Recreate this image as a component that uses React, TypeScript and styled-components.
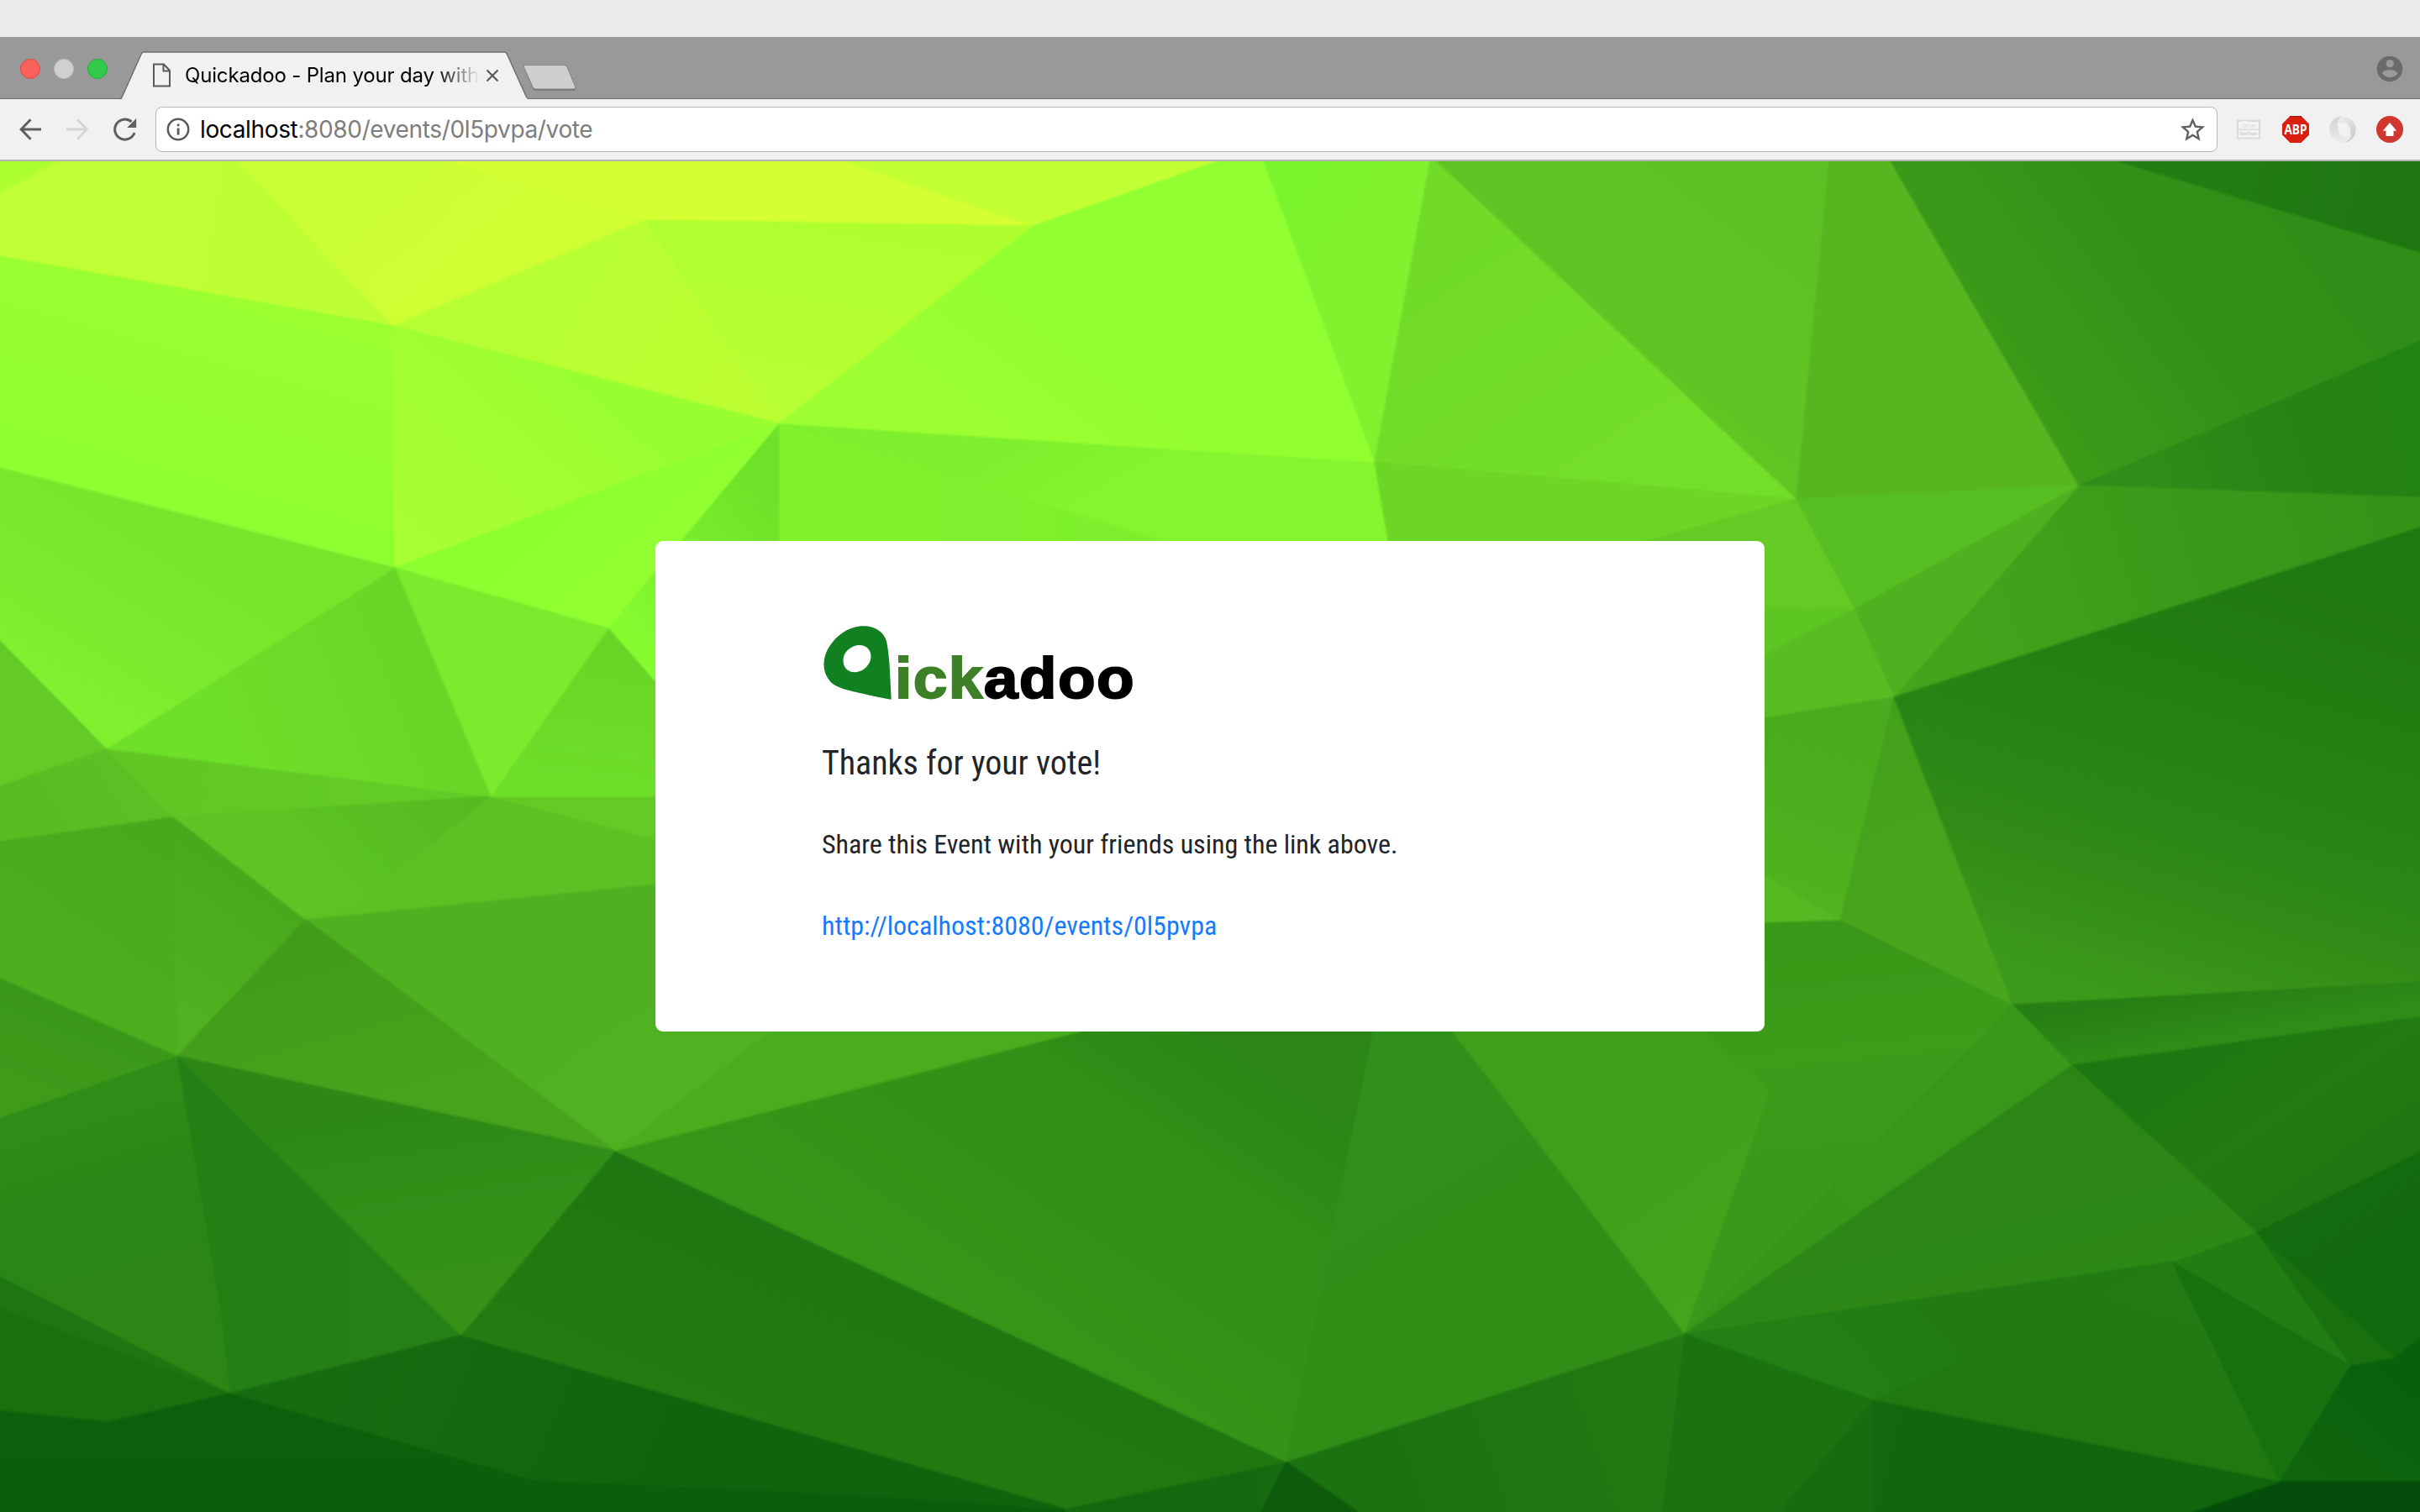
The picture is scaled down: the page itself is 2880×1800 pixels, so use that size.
import React from "react";
import styled, { createGlobalStyle } from "styled-components";

const GlobalStyle = createGlobalStyle`
  * { box-sizing: border-box; }
  html, body { margin: 0; padding: 0; }
  body { width: 2880px; height: 1800px; overflow: hidden; background: #ebebeb; }
  svg { display: block; flex: none; }
`;

/* ---------- browser window ---------- */

const Screen = styled.div`
  display: flex;
  flex-direction: column;
  width: 2880px;
  height: 1800px;
  font-family: Inter, "Liberation Sans", sans-serif;
`;

const MenuBar = styled.div`
  flex: none;
  height: 44px;
  background: #ebebeb;
`;

const TabStrip = styled.div`
  flex: none;
  display: flex;
  align-items: flex-start;
  height: 74px;
  padding-left: 24px;
  background: #999999;
  border-bottom: 1px solid #6d6d6d;
`;

const TrafficLights = styled.div`
  display: flex;
  gap: 16px;
  padding-top: 26px;
`;

const Light = styled.span<{ $fill: string; $edge: string }>`
  width: 24px;
  height: 24px;
  border-radius: 50%;
  background: ${(p) => p.$fill};
  border: 1px solid ${(p) => p.$edge};
`;

const Tab = styled.div`
  position: relative;
  display: flex;
  align-items: center;
  width: 486px;
  height: 58px;
  margin: 17px 0 0 15px;
  padding-left: 39px;
`;

const TabShape = styled.svg`
  position: absolute;
  left: 0;
  top: 0;
`;

const TabIcon = styled.svg`
  position: relative;
`;

const TabTitle = styled.div`
  position: relative;
  width: 352px;
  margin-left: 16px;
  white-space: nowrap;
  font-size: 24px;
  line-height: 34px;
  letter-spacing: -0.17px;
  color: #000;
  mask-image: linear-gradient(to right, #000 300px, transparent 351px);
`;

const CloseIcon = styled.svg`
  position: relative;
  margin-left: 6px;
`;

const NewTab = styled.svg`
  margin: 32px 0 0 -8px;
`;

const Account = styled.svg`
  margin: 22px 20px 0 auto;
`;

const Toolbar = styled.div`
  flex: none;
  display: flex;
  align-items: center;
  height: 74px;
  padding: 0 20px 0 23px;
  background: #f1f1f1;
  border-bottom: 2px solid #b4b2b4;
`;

const NavButtons = styled.div`
  display: flex;
  align-items: center;
  gap: 28px;
  width: 162px;
`;

const AddressBar = styled.div`
  display: flex;
  align-items: center;
  width: 2454px;
  height: 54px;
  padding: 0 11px 0 12px;
  background: #fff;
  border: 1.5px solid #b6b4b6;
  border-radius: 8px;
`;

const Url = styled.div`
  flex: 1;
  margin-left: 12px;
  font-size: 28px;
  line-height: 40px;
  letter-spacing: -0.36px;
  color: #7d7d7d;
`;

const Host = styled.span`
  color: #000;
`;

const Extensions = styled.div`
  display: flex;
  align-items: center;
  gap: 24px;
  margin-left: 23px;

  svg:first-child {
    margin-right: 2px;
  }
`;

/* ---------- page ---------- */

const Page = styled.main`
  position: relative;
  flex: 1;
  display: flex;
  justify-content: center;
  align-items: flex-start;
  padding-top: 452px;
  overflow: hidden;
  background: #4aab1e;
`;

const Backdrop = styled.svg`
  position: absolute;
  inset: 0;
  width: 2880px;
  height: 1608px;
  overflow: visible;
  filter: blur(1.3px);
`;

const Card = styled.section`
  position: relative;
  width: 1320px;
  height: 584px;
  padding: 100px 198px;
  background: #fff;
  border-radius: 9px;
  font-family: "Roboto Condensed", Roboto, sans-serif;
  color: #212529;
`;

const Logo = styled.div`
  display: flex;
  align-items: flex-end;
  height: 90px;
`;

const Wordmark = styled.div`
  margin: 0 0 -16px 3px;
  font-family: "Liberation Sans", Arial, sans-serif;
  font-weight: 700;
  font-size: 69px;
  line-height: 84px;
  letter-spacing: 1.3px;
  color: #000;
  -webkit-text-stroke: 2px currentColor;
  transform: scaleX(1.06);
  transform-origin: left center;
`;

const WordGreen = styled.span`
  color: #3d8027;
`;

const Heading = styled.h1`
  margin: 51px 0 0;
  font-weight: 400;
  font-size: 40px;
  line-height: 48px;
  letter-spacing: -0.03px;
`;

const Line = styled.p`
  margin: 49px 0 0;
  font-size: 32px;
  line-height: 48px;
  letter-spacing: -0.02px;

  h1 + & {
    margin-top: 48px;
  }
`;

const EventLink = styled.a`
  color: #147bff;
  text-decoration: none;
`;

/* ---------- low-poly backdrop ---------- */

type Stop = [number, string];
interface Facet {
  points: string;
  fill: string | { from: [number, number]; to: [number, number]; stops: Stop[] };
}

const flat = (points: string, fill: string): Facet => ({ points, fill });
const shade = (
  points: string,
  x1: number,
  y1: number,
  x2: number,
  y2: number,
  ...colors: string[]
): Facet => ({
  points,
  fill: {
    from: [x1, y1],
    to: [x2, y2],
    stops: colors.map((c, i) => [i / (colors.length - 1), c] as Stop),
  },
});

const facets: Facet[] = [
  flat("-20,180 84,180 70,192 0,232 -20,246", "#adff31"),
  shade("-20,243 0,230 70,192 85,180 272,180 468,388 0,305 -20,300", 0, 250, 450, 320, "#c1ff35", "#bdff34"),
  shade("272,180 500,180 768,262 468,388", 300, 192, 470, 380, "#c9ff33", "#ccff33", "#cffe33"),
  flat("500,180 970,180 1230,269 768,262", "#d5ff33"),
  flat("970,180 1495,176 1230,269", "#c2ff33"),
  shade("468,388 768,262 928,504", 620, 330, 850, 470, "#b7ff32", "#bdff31"),
  shade("768,262 1230,269 928,504", 980, 260, 940, 490, "#afff2e", "#b8ff33"),
  shade("-20,300 0,305 468,388 470,676 0,557 -20,552", 200, 340, 130, 590, "#9bff30", "#95ff31", "#8eff30"),
  shade("468,388 928,504 470,676", 680, 440, 500, 640, "#99fe30", "#a4ff31", "#a8ff32"),
  shade("470,676 928,504 724,748", 600, 600, 720, 740, "#8bff30", "#93ff31"),
  shade("724,748 850,598 800,830 770,820", 740, 740, 790, 700, "#82f82f", "#78f02d"),
  shade("724,748 928,504 928,660 780,820", 740, 740, 925, 590, "#86fb30", "#78ed2c", "#6ee129"),
  shade("928,504 1440,660 928,660", 930, 640, 1400, 640, "#82f22e", "#7cef2c"),
  shade("928,504 1636,550 1655,660 1440,660", 1200, 530, 1250, 620, "#7eef2d", "#84f52e"),
  shade("1230,269 1495,176 1503,180 1636,550 928,504", 1350, 250, 1150, 520, "#91ff31", "#94ff31", "#9dff31"),
  shade("1500,180 1705,180 1636,550", 1550, 200, 1640, 260, "#7af42c", "#81f22e"),
  shade("1704,180 2138,594 1636,550", 1700, 250, 1900, 560, "#71db28", "#74df28"),
  shade("1697,180 2178,180 2138,594", 2100, 200, 1900, 460, "#5cc023", "#62c725"),
  flat("2178,180 2243,180 2474,578 2138,594", "#57b620"),
  shade("2243,180 2495,180 2520,192 2880,300 2900,306 2900,400 2880,408 2474,578", 2750, 250, 2400, 500, "#2f8e17", "#349218", "#3e9c1a"),
  shade("2495,180 2900,180 2900,306 2880,300 2520,192", 2650, 200, 2850, 260, "#227d13", "#1e7611"),
  shade("2474,578 2900,398 2900,594 2880,592", 2550, 570, 2850, 470, "#2f8e18", "#298515", "#228213"),
  shade("2474,578 2900,593 2900,622 2880,628 2254,830", 2350, 760, 2850, 610, "#42a41b", "#3b9a1a", "#359317"),
  flat("1636,550 2138,594 1960,660 1655,660", "#6dd526"),
  flat("2138,594 2207,725 2080,725 1930,660 1960,644", "#66ca24"),
  flat("2138,594 2474,578 2207,725", "#57bf22"),
  flat("2207,725 2474,578 2254,830", "#4fb11f"),
  flat("2207,725 2080,790 2080,722", "#5ec623"),
  flat("2207,725 2254,830 2080,858 2080,790", "#57bd22"),
  shade("2254,830 2190,1096 2080,1030 2080,858", 2180, 850, 2110, 1050, "#49ab1d", "#4fb31f"),
  flat("2190,1096 2080,1102 2080,1030", "#55b921"),
  shade("2254,830 2395,1196 2190,1096", 2230, 880, 2350, 1150, "#44a11b", "#49a61c"),
  shade("2254,830 2880,628 2900,622 2900,1168 2880,1169 2395,1196", 2700, 660, 2540, 1190, "#1f7911", "#237e12", "#278415", "#318c17", "#3c9a1a"),
  shade("2395,1196 2900,1168 2900,1210 2465,1268", 2600, 1180, 2610, 1240, "#267f14", "#2f8c17"),
  shade("2465,1268 2900,1208 2900,1362 2685,1467", 2620, 1260, 2740, 1440, "#1e7811", "#227c12", "#207611"),
  shade("2685,1467 2900,1362 2900,1575 2850,1617", 2750, 1440, 2850, 1580, "#146b0f", "#116a0e"),
  flat("2685,1467 2850,1617 2797,1626", "#18700f"),
  flat("2685,1467 2797,1626 2585,1502", "#227d13"),
  shade("2465,1268 2685,1467 2585,1502 2004,1588", 2450, 1320, 2500, 1520, "#2c8616", "#2d8916"),
  shade("2395,1196 2465,1268 2004,1588", 2420, 1230, 2050, 1550, "#379819", "#369618"),
  shade("2060,1100 2190,1096 2395,1196 2004,1588 2105,1300 1990,1200", 2150, 1110, 2180, 1400, "#3a9818", "#3d9c1a", "#3a991a"),
  shade("1706,1200 2000,1200 2105,1300 2004,1588", 1750, 1220, 2000, 1560, "#40a01b", "#3f9f1a", "#44a51c"),
  shade("2585,1502 2004,1588 2229,1667", 2300, 1550, 2200, 1640, "#217b12", "#228014"),
  shade("2585,1502 2229,1667 2713,1764", 2550, 1540, 2500, 1720, "#237b13", "#207810"),
  flat("2585,1502 2797,1626 2713,1764", "#18710f"),
  shade("2797,1626 2850,1617 2900,1575 2900,1764 2713,1764", 2740, 1740, 2850, 1620, "#0f660e", "#09600c"),
  flat("2713,1764 2900,1764 2900,1820 2550,1820", "#054d0b"),
  shade("2229,1667 2713,1764 2550,1820 2229,1820", 2230, 1700, 2600, 1790, "#12680e", "#10650d"),
  flat("2229,1667 2229,1820 2100,1820", "#166c0f"),
  flat("2004,1588 2229,1667 2100,1820 1975,1820", "#1a7210"),
  shade("1530,1740 2004,1588 1975,1820 1645,1820", 1600, 1760, 1980, 1620, "#1a7210", "#237a12"),
  flat("1530,1740 1645,1820 1490,1820", "#0e5b0b"),
  shade("1530,1740 1490,1820 1267,1820 1267,1796", 1520, 1760, 1280, 1800, "#15690f", "#13680e"),
  shade("732,1370 1530,1740 1267,1796 548,1590", 1000, 1470, 900, 1700, "#1e7711", "#21780f", "#237c12"),
  shade("732,1370 1285,1228 1340,1200 1706,1200 2004,1588 1530,1740", 1450, 1230, 1200, 1600, "#2b8615", "#309017", "#349316", "#379618"),
  shade("1640,1200 1706,1200 2004,1588 1530,1740", 1630, 1300, 1750, 1500, "#30901a", "#308e17"),
  flat("732,1370 960,1190 1350,1200 1285,1228 965,1310", "#49ad1e"),
  shade("363,1094 800,1050 800,1190 965,1190 732,1370", 550, 1080, 720, 1320, "#4eb120", "#50b221"),
  shade("210,1257 363,1094 732,1370", 400, 1130, 450, 1310, "#429c1a", "#47a31b"),
  shade("210,1257 732,1370 548,1590", 500, 1310, 540, 1570, "#2d8816", "#319018", "#389217"),
  shade("210,1257 548,1590 273,1659 258,1560", 250, 1450, 430, 1450, "#228014", "#258015"),
  shade("-20,1336 0,1330 210,1257 262,1560 273,1659 0,1520 -20,1512", 80, 1320, 160, 1590, "#2f8d17", "#2a8616", "#2c8616"),
  flat("-20,1512 0,1520 273,1659 0,1558 -20,1552", "#1e7611"),
  flat("-20,1552 0,1558 273,1659 128,1693 0,1679 -20,1677", "#18700f"),
  shade("273,1659 548,1590 1267,1796 1267,1820 980,1782 637,1763", 420, 1620, 800, 1780, "#186b0f", "#11640d"),
  shade("-20,1677 128,1693 273,1659 637,1763 980,1778 1267,1797 1267,1820 -20,1820", 200, 1700, 200, 1800, "#0b610b", "#0c5d0a"),
  shade("-20,1003 0,1001 206,972 210,1257 0,1165 -20,1157", 200, 980, 60, 1180, "#47a91c", "#4dae1e"),
  shade("206,972 363,1094 210,1257", 320, 1060, 220, 1200, "#48a91d", "#4fb220"),
  shade("-20,1157 0,1165 210,1257 0,1330 -20,1336", 100, 1200, 60, 1300, "#3a9819", "#3f9b1a"),
  shade("-20,942 0,935 127,891 206,972 0,1001 -20,1003", 150, 900, 20, 980, "#5bc123", "#57bc22"),
  flat("-20,740 0,762 127,891 0,935 -20,942", "#63ca26"),
  shade("127,891 584,948 206,972", 200, 910, 450, 950, "#62c725", "#63cb26"),
  shade("206,972 584,948 800,1004 800,1050 363,1094", 560, 950, 420, 1080, "#55ba21", "#5dc423"),
  flat("584,948 430,1075 363,1094 800,1050 800,1004", "#5cc223"),
  flat("584,948 800,948 800,1004", "#64cb25"),
  shade("584,948 724,748 800,835 800,948", 720, 770, 700, 930, "#67d526", "#6edf29"),
  flat("470,676 724,748 584,948", "#7aec2d"),
  shade("470,676 584,948 127,891", 500, 800, 260, 890, "#69d627", "#6fe029"),
  shade("-20,552 0,557 470,676 127,891 0,762 -20,740", 250, 640, 120, 850, "#77e62b", "#79ea2c", "#80f12f"),
];

function Facets() {
  return (
    <Backdrop viewBox="0 192 2880 1608" preserveAspectRatio="none" aria-hidden="true">
      <defs>
        {facets.map((f, i) =>
          typeof f.fill === "string" ? null : (
            <linearGradient
              key={i}
              id={`facet-${i}`}
              gradientUnits="userSpaceOnUse"
              x1={f.fill.from[0]}
              y1={f.fill.from[1]}
              x2={f.fill.to[0]}
              y2={f.fill.to[1]}
            >
              {f.fill.stops.map(([o, c]) => (
                <stop key={o} offset={o} stopColor={c} />
              ))}
            </linearGradient>
          )
        )}
      </defs>
      {facets.map((f, i) => {
        const paint = typeof f.fill === "string" ? f.fill : `url(#facet-${i})`;
        return <polygon key={i} points={f.points} fill={paint} stroke={paint} strokeWidth={1} />;
      })}
    </Backdrop>
  );
}

/* ---------- icons ---------- */

const BackIcon = () => (
  <svg width="28" height="28" viewBox="0 0 28 28" fill="none" stroke="#5f5f5f" strokeWidth="3">
    <path d="M26 14H3M13.500 2.200L2.200 14l11.300 11.800" />
  </svg>
);

const ForwardIcon = () => (
  <svg width="28" height="28" viewBox="0 0 28 28" fill="none" stroke="#d5d5d5" strokeWidth="3">
    <path d="M0 14h23M13 2.200L24.300 14 13 25.800" />
  </svg>
);

const ReloadIcon = () => (
  <svg width="28" height="28" viewBox="0 0 28 28">
    <path d="M25 18A12 12 0 1 1 21.500 5" fill="none" stroke="#5f5f5f" strokeWidth="3" />
    <path d="M27.200 1v11H16.200z" fill="#5f5f5f" />
  </svg>
);

const InfoIcon = () => (
  <svg width="28" height="28" viewBox="0 0 28 28">
    <circle cx="14" cy="14" r="12.200" fill="none" stroke="#5a5a5a" strokeWidth="2.500" />
    <path d="M12.700 12.400h2.800v8h-2.800zM12.700 7.500h2.800v2.800h-2.800z" fill="#5a5a5a" />
  </svg>
);

const StarIcon = () => (
  <svg width="35" height="35" viewBox="0 0 24 24" fill="#5f5f5f">
    <path d="M22 9.240l-7.190-.62L12 2 9.190 8.630 2 9.240l5.460 4.730L5.820 21 12 17.270 18.180 21l-1.630-7.030L22 9.240zM12 15.400l-3.760 2.270 1-4.280-3.320-2.880 4.380-.38L12 6.100l1.710 4.040 4.380.38-3.320 2.880 1 4.280L12 15.400z" />
  </svg>
);

const DevToolsIcon = () => (
  <svg width="28" height="24" viewBox="0 0 28 24">
    <path d="M0 .5h28v23H0z" fill="#dadada" />
    <path d="M2 3h3l1-1h5l1.500 1H26v8.500H2zM2 13h24v8.500H2z" fill="#f4f4f4" />
    <text x="14" y="9.600" textAnchor="middle" fontFamily="Inter, sans-serif" fontSize="5.600" fill="#dedede" textLength="18">Discover</text>
    <text x="14" y="19.200" textAnchor="middle" fontFamily="Inter, sans-serif" fontSize="5.200" fontWeight="600" fill="#c9c9c9" textLength="21">DevTools</text>
  </svg>
);

const AdblockIcon = () => (
  <svg width="32" height="32" viewBox="0 0 32 32">
    <path d="M9.500 0h13L32 9.500v13L22.500 32h-13L0 22.500v-13z" fill="#d81f12" />
    <path d="M9.500 0h13l1.200 1.200H8.300z" fill="#a3180e" />
    <text x="16.400" y="22" textAnchor="middle" fontFamily="'Open Sans', sans-serif" fontSize="15.500" fontWeight="700" fill="#8d140b" opacity=".5" textLength="27.500" lengthAdjust="spacingAndGlyphs">ABP</text>
    <text x="16" y="21.500" textAnchor="middle" fontFamily="'Open Sans', sans-serif" fontSize="15.500" fontWeight="700" fill="#fff" textLength="27" lengthAdjust="spacingAndGlyphs">ABP</text>
  </svg>
);

const SwirlIcon = () => (
  <svg width="32" height="32" viewBox="0 0 32 32">
    <defs>
      <linearGradient id="swirl-a" x1="0" y1="0" x2=".6" y2="1">
        <stop offset="0" stopColor="#f0f0f0" />
        <stop offset="1" stopColor="#cacaca" />
      </linearGradient>
      <linearGradient id="swirl-b" x1=".3" y1="0" x2=".5" y2="1">
        <stop offset="0" stopColor="#d2d2d2" />
        <stop offset="1" stopColor="#ededed" />
      </linearGradient>
    </defs>
    <path
      d="M10 1.500C18-1.500 31.500 3 31.700 16 31.800 25 25 31 17 31.700c6-3 8.500-8 8.300-14C25 11 20 6.500 12 8.500 9 8 7.500 4 10 1.500z"
      fill="url(#swirl-a)"
    />
    <path
      d="M15.500.3C6 1.500 1.500 6 .3 13 -.8 23 6 31 16 31.700c6-1 9.500-5 10.500-10.500-3 3.500-7 4.500-10 3.300-4-1.500-6-6-5.500-11C8 9 10 4 15.500.3z"
      fill="url(#swirl-b)"
      stroke="#f1f1f1"
      strokeWidth=".4"
    />
    <ellipse cx="16" cy="16" rx="4.300" ry="7.600" fill="#f2f2f2" />
  </svg>
);

const UploadIcon = () => (
  <svg width="32" height="32" viewBox="0 0 32 32">
    <circle cx="16" cy="16" r="16" fill="#d0372f" />
    <path d="M16 8l8.200 9.800h-3.700v6.200h-9v-6.200H7.800z" fill="#fff" />
  </svg>
);

const Pin = () => (
  <svg width="84" height="90" viewBox="977 744 84 90">
    <path
      fillRule="evenodd"
      fill="#118021"
      d="M1027 745.300c13 0 23.500 6.500 27 18 1.700 8 3 18 3.700 30l2 39.400c-12-1.700-30-5.700-46-9.700-13-3-21.500-6.500-26-11-6-6.500-8.500-14-8.200-22.500.7-12 6-21.500 16-31.200 9-8.500 20-13 31.500-13zM1022 768c-10 0-19.300 8-19.500 17.500-.2 9 5.500 14.800 13.500 14.800 10 0 19.300-8.800 19.500-18.500.1-8.300-5.500-13.800-13.500-13.800z"
    />
  </svg>
);

export default function App() {
  return (
    <>
      <GlobalStyle />
      <Screen>
        <MenuBar />
        <TabStrip>
          <TrafficLights>
            <Light $fill="#fc605b" $edge="#e2443f" />
            <Light $fill="#d0d0d0" $edge="#bfbfbf" />
            <Light $fill="#35cb4a" $edge="#1fae33" />
          </TrafficLights>
          <Tab>
            <TabShape width="488" height="58" viewBox="0 0 488 58">
              <path d="M1 58L25 2.500Q26 1 28 1h429q2 0 3 1.500L483.500 54q1.500 3 3.500 3v1z" fill="#f1f1f1" />
              <path d="M0 56.500q1 0 2-1.500L25.500 2.500Q26.500 1 28.500 1h428.500q2 0 3 1.500L483.500 54.500q1 2 3.500 2" fill="none" stroke="#6d6d6d" strokeWidth="1.500" />
            </TabShape>
            <TabIcon width="22" height="30" viewBox="0 0 22 30" fill="none" stroke="#5a5a5a" strokeWidth="2">
              <path d="M1 1.500h12l7 7.500v18.500H1zM12.500 1.500v8H20" />
            </TabIcon>
            <TabTitle>Quickadoo - Plan your day with</TabTitle>
            <CloseIcon width="16" height="16" viewBox="0 0 16 16" stroke="#5a5a5a" strokeWidth="2.200">
              <path d="M1.500 1.500l13 13M14.500 1.500l-13 13" />
            </CloseIcon>
          </Tab>
          <NewTab width="66" height="34" viewBox="0 0 66 34">
            <path d="M4 2.500h46q3 0 4 2.500l9.500 24q1 3-2 3H17q-3 0-4-2.500L2.500 5q-1-2.500 1.500-2.500z" fill="#7c7c7c" />
            <path d="M4 1.500h46q3 0 4 2.500l9.500 23q1 3-2 3H17q-3 0-4-2.500L2.500 4q-1-2.500 1.500-2.500z" fill="#cfcfcf" stroke="#858585" />
          </NewTab>
          <Account width="32" height="32" viewBox="0 0 32 32">
            <circle cx="16" cy="16" r="15.300" fill="#6b6b6b" />
            <circle cx="16.300" cy="9.600" r="4.700" fill="#999" />
            <path d="M6.800 21c1.500-2.500 5.500-3.800 9.400-3.800s7.900 1.300 9.400 3.800c-2 3.200-5.500 5.200-9.400 5.200s-7.400-2-9.400-5.200z" fill="#999" />
          </Account>
        </TabStrip>
        <Toolbar>
          <NavButtons>
            <BackIcon />
            <ForwardIcon />
            <ReloadIcon />
          </NavButtons>
          <AddressBar>
            <InfoIcon />
            <Url>
              <Host>localhost</Host>:8080/events/0l5pvpa/vote
            </Url>
            <StarIcon />
          </AddressBar>
          <Extensions>
            <DevToolsIcon />
            <AdblockIcon />
            <SwirlIcon />
            <UploadIcon />
          </Extensions>
        </Toolbar>
        <Page>
          <Facets />
          <Card>
            <Logo>
              <Pin />
              <Wordmark>
                <WordGreen>ick</WordGreen>adoo
              </Wordmark>
            </Logo>
            <Heading>Thanks for your vote!</Heading>
            <Line>Share this Event with your friends using the link above.</Line>
            <Line>
              <EventLink href="#">http://localhost:8080/events/0l5pvpa</EventLink>
            </Line>
          </Card>
        </Page>
      </Screen>
    </>
  );
}
